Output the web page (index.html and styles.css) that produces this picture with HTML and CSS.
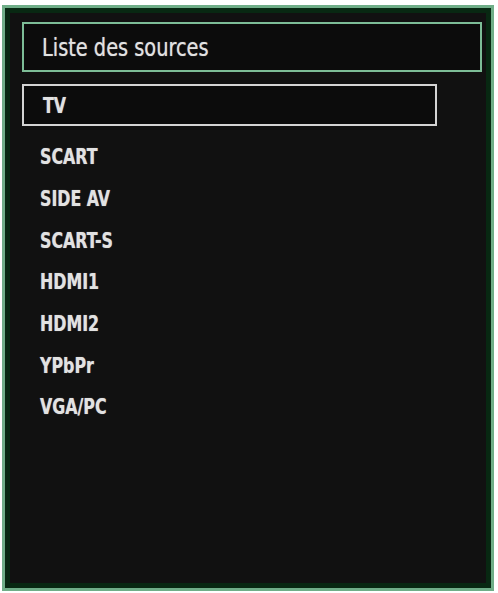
FILE: index.html
```html
<!DOCTYPE html>
<html lang="fr">
<head>
<meta charset="utf-8">
<title>Liste des sources</title>
<link rel="stylesheet" href="styles.css">
</head>
<body>
<div class="frame">
  <div class="header"><span class="label">Liste des sources</span></div>
  <div class="selected"><span class="label">TV</span></div>
  <ul class="sources">
    <li><span class="label">SCART</span></li>
    <li><span class="label">SIDE AV</span></li>
    <li><span class="label">SCART-S</span></li>
    <li><span class="label">HDMI1</span></li>
    <li><span class="label">HDMI2</span></li>
    <li><span class="label">YPbPr</span></li>
    <li><span class="label">VGA/PC</span></li>
  </ul>
</div>
</body>
</html>
```
FILE: styles.css
```css
html, body {
  margin: 0;
  padding: 0;
  background: #ffffff;
}
.frame {
  box-sizing: border-box;
  margin: 5px 4px 0 2px;
  width: 492px;
  height: 586px;
  border: 3px solid #6fae88;
  box-shadow: inset 0 0 0 5px #082812;
  background: #111111;
  padding: 14px 9px 0 17px;
  font-family: "DejaVu Sans Condensed", "Liberation Sans", sans-serif;
  color: #e2e2e2;
}
.label {
  display: inline-block;
  transform-origin: left center;
  text-shadow: 0 0 1px rgba(255,255,255,0.55);
}
.header {
  box-sizing: border-box;
  height: 50px;
  border: 2px solid #7dbd97;
  display: flex;
  align-items: center;
  padding-left: 18px;
  font-size: 25px;
  background: #0c0c0c;
}
.header .label {
  transform: scaleX(0.86);
}
.selected {
  box-sizing: border-box;
  margin-top: 12px;
  width: 415px;
  height: 42px;
  border: 2px solid #d4d4d4;
  display: flex;
  align-items: center;
  padding-left: 19px;
  font-size: 22px;
  font-weight: bold;
  background: #0c0c0c;
}
.sources {
  list-style: none;
  margin: 10px 0 0 0;
  padding: 0 0 0 18px;
}
.sources li {
  height: 41.7px;
  display: flex;
  align-items: center;
  font-size: 22px;
  font-weight: bold;
}
.selected .label,
.sources .label {
  transform: scaleX(0.8);
}
```
